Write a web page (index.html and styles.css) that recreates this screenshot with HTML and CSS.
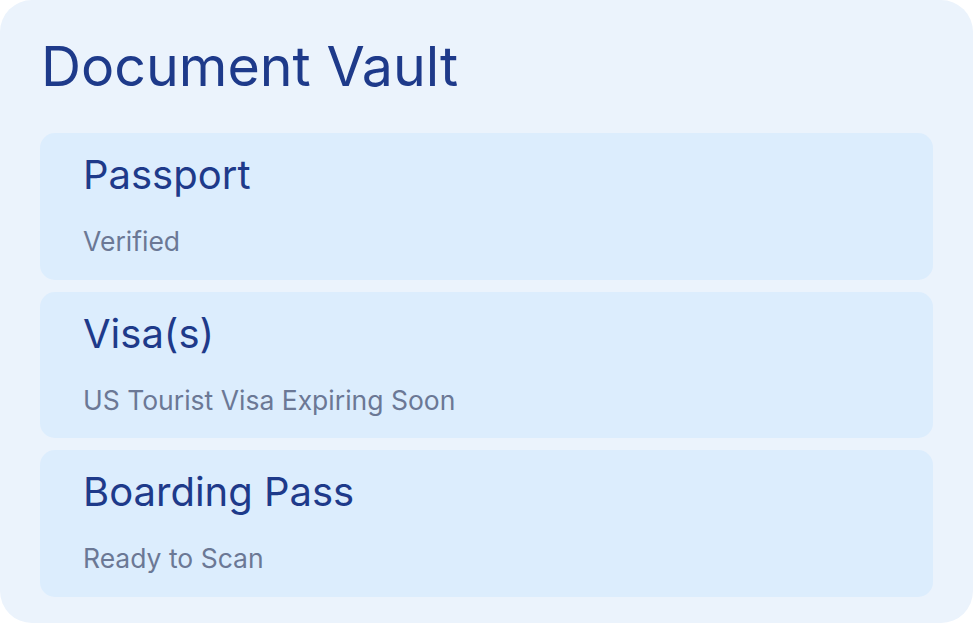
FILE: index.html
```html
<!DOCTYPE html>
<html lang="en">
<head>
    <meta charset="UTF-8">
    <meta name="viewport" content="width=device-width, initial-scale=1.0">
    <title>Document Vault</title>
    <link rel="stylesheet" href="styles.css">
</head>
<body>
    <div class="vault">
        <h1 class="vault-title">Document Vault</h1>
        <div class="doc-list">
            <div class="doc">
                <div class="doc-name">Passport</div>
                <div class="doc-status">Verified</div>
            </div>
            <div class="doc">
                <div class="doc-name">Visa(s)</div>
                <div class="doc-status">US Tourist Visa Expiring Soon</div>
            </div>
            <div class="doc">
                <div class="doc-name">Boarding Pass</div>
                <div class="doc-status">Ready to Scan</div>
            </div>
        </div>
    </div>
</body>
</html>
```

FILE: styles.css
```css
body{
    margin: 0;
    background-color: white;
    font-family: 'Inter', 'Noto Sans', sans-serif;
}
.vault{
    box-sizing: border-box;
    width: 973px;
    height: 623px;
    background-color: #ebf3fc;
    border-radius: 32px;
    padding: 30px 40px 26px 40px;
}
.vault-title{
    margin: 0px 0px 31px 0px;
    font-size: 55.5px;
    line-height: 72px;
    font-weight: 400;
    color: #1e3a8a;
    padding-left: 1px;
}
.doc-list{
    display: flex;
    flex-direction: column;
    gap: 12px;
}
.doc{
    box-sizing: border-box;
    height: 146.5px;
    background-color: #dcedfd;
    border-radius: 15px;
    padding: 17px 43px;
}
.doc-name{
    font-size: 40px;
    line-height: 50px;
    color: #1e3a8a;
}
.doc-status{
    margin-top: 26px;
    font-size: 26.5px;
    line-height: 30px;
    color: #6b7895;
}
```
